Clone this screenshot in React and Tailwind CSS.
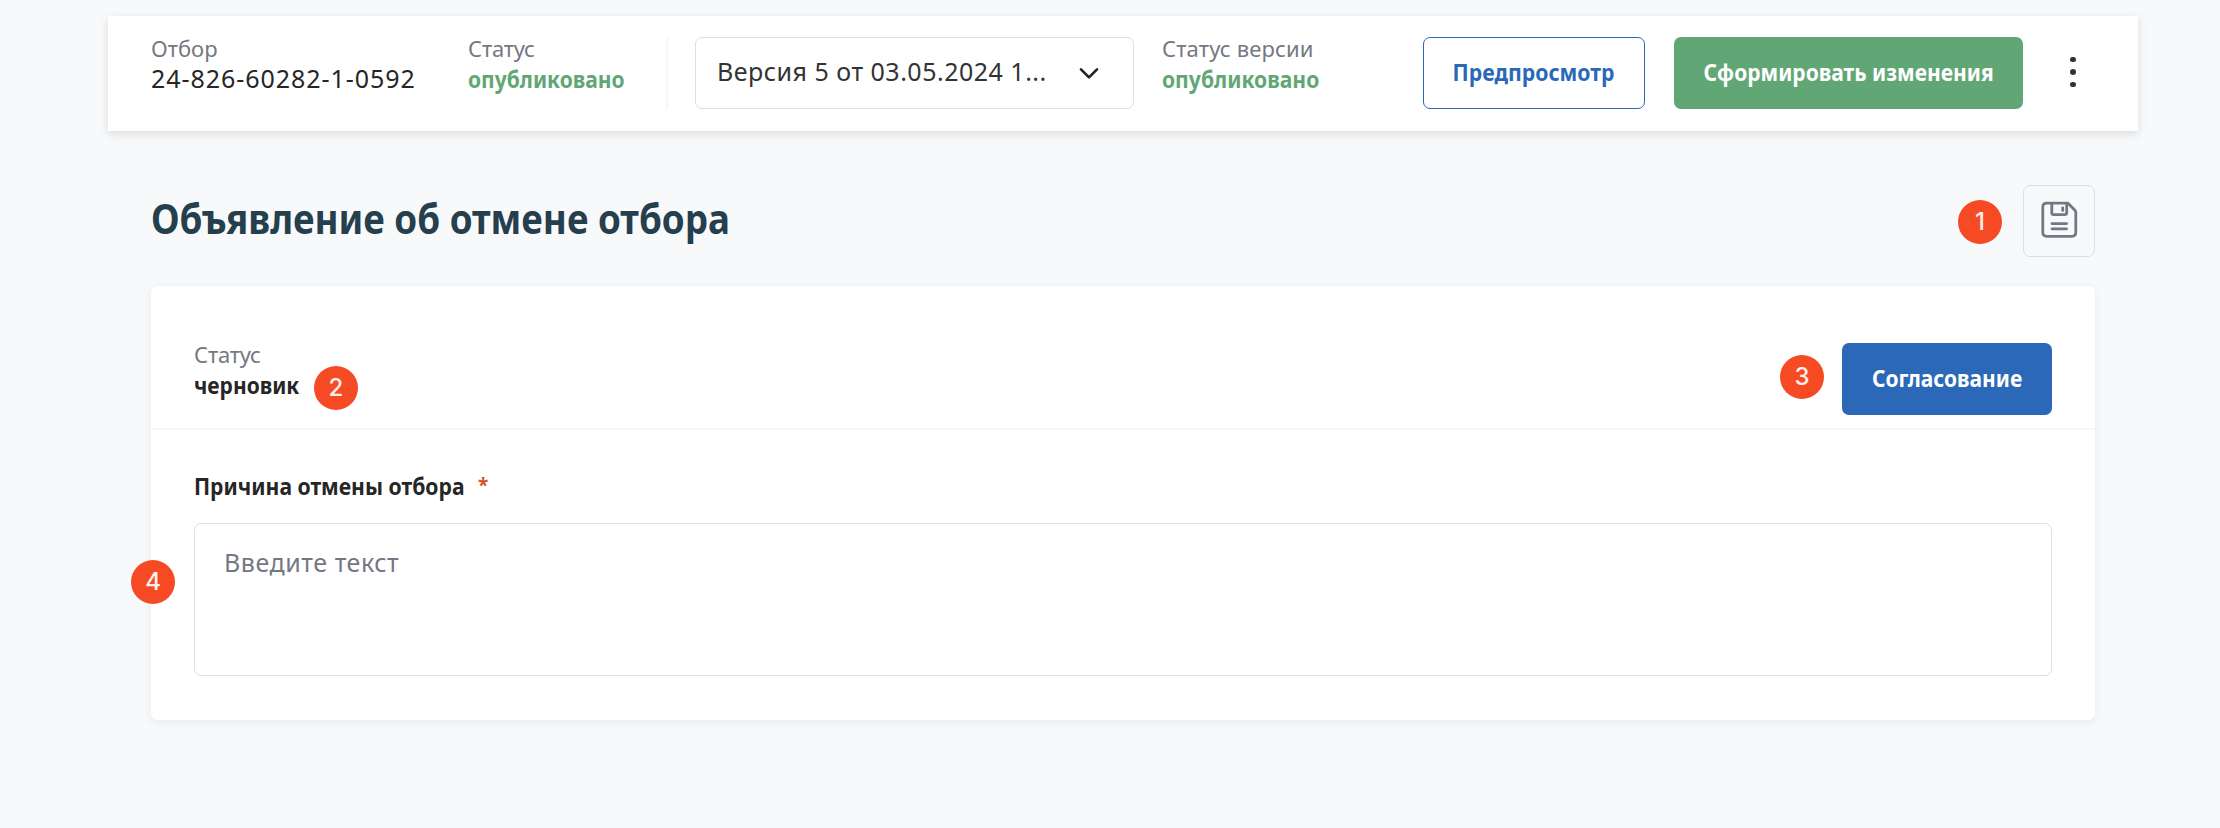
function Bold({ children, className = '' }) {
  return (
    <span className={`inline-block whitespace-nowrap font-bold ${className}`}>{children}</span>
  );
}

function Badge({ n, className }) {
  return (
    <div
      className={`absolute flex size-11 items-center justify-center rounded-full bg-[#f64a24] pb-px font-['Inter',sans-serif] text-[24px] font-medium leading-none text-[#fdf0ec] ${className}`}
    >
      {n}
    </div>
  );
}

function Info({ label, className = '', labelClass = '', children }) {
  return (
    <div className={`-mt-1 shrink-0 whitespace-nowrap ${className}`}>
      <div className={`h-[30px] text-[22px] leading-[30px] text-[#747883] ${labelClass}`}>{label}</div>
      <div className="h-[31px] text-[24px] leading-[31px]">{children}</div>
    </div>
  );
}

function SaveIcon() {
  return (
    <svg width="70" height="70" viewBox="1 1 70 70" fill="none" stroke="#747883" strokeWidth="2.8" strokeLinecap="round" strokeLinejoin="round">
      <path d="M23.8 18.2H43.6Q45 18.2 46 19.2L51.7 24.9Q52.8 26 52.8 27.4V47.3Q52.8 51.3 48.8 51.3H23.8Q19.8 51.3 19.8 47.3V22.2Q19.8 18.2 23.8 18.2Z" />
      <path d="M28.8 18.4V27.7Q28.8 29.6 30.7 29.6H41.8Q43.7 29.6 43.7 27.7V18.6" />
      <path d="M39.7 22.8V25.6M29 38.6H43.6M29 43.9H43.6" />
    </svg>
  );
}

export default function App() {
  return (
    <div className="h-[828px] w-[2220px] overflow-hidden bg-[#f8f9fb] pt-4 font-['Noto_Sans',sans-serif] text-[#262626]">
      <header className="ml-[108px] flex h-[115px] w-[2030px] items-start bg-white pl-[43px] pt-[21px] shadow-[0_3px_9px_rgba(0,0,0,0.12)]">
        <Info label="Отбор" className="w-[317px]">
          <span className="text-[25px] tracking-[0.95px]">24-826-60282-1-0592</span>
        </Info>
        <Info label="Статус" labelClass="tracking-[-0.2px]" className="w-[198px]">
          <Bold className="origin-left scale-x-[0.876]">
            <span className="text-[#61a775]">опубликовано</span>
          </Bold>
        </Info>
        <div className="h-[72px] w-[2px] bg-[#f8f8fa]" />
        <div className="ml-[27px] flex h-[72px] w-[439px] shrink-0 items-center justify-between rounded-[7px] border border-[#dddee6] pl-[21px] pr-[34px]">
          <span className="whitespace-nowrap pb-[2px] text-[25px] tracking-[0.5px] text-[#333333]">Версия 5 от 03.05.2024 1...</span>
          <svg width="20" height="14" viewBox="0 0 20 14" fill="none" stroke="#222427" strokeWidth="2.7" strokeLinecap="round" strokeLinejoin="round">
            <path d="M2 3.4L10 11.4L18 3.4" />
          </svg>
        </div>
        <Info label="Статус версии" labelClass="tracking-[0.15px]" className="ml-7 w-[261px]">
          <Bold className="origin-left scale-x-[0.88]">
            <span className="text-[#61a775]">опубликовано</span>
          </Bold>
        </Info>
        <button className="flex h-[72px] w-[222px] shrink-0 items-center justify-center rounded-[7px] border border-[#2b69b8] pb-[3px] text-[24px] text-[#2b69b8]">
          <Bold className="scale-x-[0.885]">Предпросмотр</Bold>
        </button>
        <button className="ml-[29px] flex h-[72px] w-[349px] shrink-0 items-center justify-center rounded-[7px] bg-[#61a775] pb-[3px] text-[24px] text-white">
          <Bold className="scale-x-[0.876]">Сформировать изменения</Bold>
        </button>
        <div className="ml-[47px] flex h-[70px] flex-col items-center justify-center gap-[7px]">
          <span className="size-[5.6px] rounded-full bg-[#2f323b]" />
          <span className="size-[5.6px] rounded-full bg-[#2f323b]" />
          <span className="size-[5.6px] rounded-full bg-[#2f323b]" />
        </div>
      </header>

      <main className="ml-[151px] w-[1944px]">
        <div className="relative mt-[54px] flex h-[72px] items-center justify-between">
          <h1 className="pb-[6px] text-[41px] leading-[56px] text-[#263f4d]">
            <Bold className="origin-left scale-x-[0.896]">Объявление об отмене отбора</Bold>
          </h1>
          <button className="size-[72px] rounded-[7px] border border-[#dddee6]">
            <SaveIcon />
          </button>
          <Badge n="1" className="right-[93px] top-[15px]" />
        </div>

        <section className="relative mt-[29px] h-[434px] rounded-[7px] bg-white shadow-[0_2px_10px_rgba(0,0,0,0.07)]">
          <div className="flex h-[144px] items-start justify-between border-b-2 border-[#f6f7f9] px-[43px] pt-[57px]">
            <Info label="Статус" labelClass="tracking-[-0.2px]">
              <Bold className="origin-left scale-x-[0.873]">черновик</Bold>
            </Info>
            <button className="flex h-[72px] w-[210px] items-center justify-center rounded-[7px] bg-[#2b69b8] pb-[3px] text-[24px] text-white">
              <Bold className="scale-x-[0.873]">Согласование</Bold>
            </button>
          </div>
          <div className="px-[43px] pt-10">
            <div className="flex h-[33px] items-start text-[24px] leading-[32px]">
              <Bold className="w-[284px] origin-left scale-x-[0.881]">Причина отмены отбора</Bold>
              <span className="text-[19px] font-bold leading-[30px] text-[#d0532f]">*</span>
            </div>
            <div className="mt-5 h-[153px] rounded-[7px] border border-[#dddee6] px-[29px] pt-[22px] text-[25px] leading-[32px] tracking-[0.55px] text-[#747883]">
              Введите текст
            </div>
          </div>
          <Badge n="2" className="left-[163px] top-[80px]" />
          <Badge n="3" className="right-[271px] top-[69px]" />
          <Badge n="4" className="left-[-20px] top-[274px]" />
        </section>
      </main>
    </div>
  );
}
